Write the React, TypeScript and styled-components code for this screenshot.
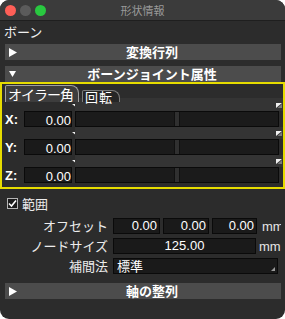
import React from 'react';
import styled, { createGlobalStyle } from 'styled-components';

const jp = `"Noto Sans CJK JP", "Liberation Sans", sans-serif`;
const latin = `"Liberation Sans", "Noto Sans CJK JP", sans-serif`;

const GlobalStyle = createGlobalStyle`
  html, body { margin: 0; padding: 0; background: #ffffff; }
  body { font-family: ${jp}; }
`;

const Window = styled.div`
  width: 285px;
  height: 319px;
  background: #2c2c2c;
  border-radius: 9px;
  overflow: hidden;
  display: flex;
  flex-direction: column;
  color: #ececec;
  font-family: ${jp};
  font-size: 13px;
`;

const TitleBar = styled.div`
  height: 20px;
  flex: none;
  display: grid;
  grid-template-columns: 1fr auto 1fr;
  align-items: center;
  background: #3b3b3b;
  border-bottom: 1px solid #1f1f1f;
`;

const Lights = styled.div`
  display: flex;
  gap: 4px;
  padding-left: 5px;
`;

const Light = styled.span<{ $color: string }>`
  width: 11px;
  height: 11px;
  border-radius: 50%;
  background: ${(p) => p.$color};
`;

const Title = styled.div`
  font-size: 11px;
  color: #9a9a9a;
`;

const GroupLabel = styled.div`
  height: 22px;
  line-height: 22px;
  padding-left: 4px;
  color: #f0f0f0;
`;

const Header = styled.div<{ $top?: number }>`
  height: 16px;
  margin: ${(p) => p.$top ?? 0}px 4px 0 5px;
  background: #4c4c4c;
  display: flex;
  align-items: center;
  position: relative;
  padding-left: 18px;
  font-weight: bold;
  color: #ffffff;
  line-height: 16px;
`;

const HeaderIcon = styled.span`
  position: absolute;
  left: 4px;
  top: 0;
  height: 16px;
  display: flex;
  align-items: center;
`;

const HeaderText = styled.span`
  flex: 1;
  text-align: center;
`;

const Frame = styled.div`
  height: 107px;
  box-sizing: border-box;
  border: 2px solid #e6dc00;
  display: flex;
  flex-direction: column;
`;

const Tabs = styled.div`
  display: flex;
  align-items: flex-end;
  gap: 3px;
  padding-left: 3px;
  height: 14px;
  flex: none;
  position: relative;
  z-index: 1;
`;

const Tab = styled.div<{ $active?: boolean }>`
  height: ${(p) => (p.$active ? 17 : 12)}px;
  margin-bottom: -4px;
  box-sizing: border-box;
  padding: ${(p) => (p.$active ? '0 5px 0 2px' : '0 6px 0 2px')};
  border: 1px solid ${(p) => (p.$active ? '#a0a0a0' : '#7c7c7c')};
  border-bottom: none;
  border-radius: 2px 8px 0 0;
  background: ${(p) => (p.$active ? '#3d3d3d' : '#262626')};
  color: #ffffff;
  font-size: ${(p) => (p.$active ? 14 : 13)}px;
  letter-spacing: ${(p) => (p.$active ? -1 : 1)}px;
  line-height: ${(p) => (p.$active ? 16 : 11)}px;
  white-space: nowrap;
`;

const Panel = styled.div`
  display: flex;
  flex-direction: column;
  padding: 0 4px 0 3px;
`;

const MarkerStrip = styled.div<{ $h: number }>`
  height: ${(p) => p.$h}px;
  display: grid;
  grid-template-columns: 16px 48px 1fr;
  column-gap: 3px;
`;

const MarkerLeft = styled.svg`
  grid-column: 2;
  align-self: end;
  justify-self: end;
  margin: 0 -5px 3px 0;
`;

const Band = styled.div`
  grid-column: 3;
  margin-right: -4px;
  background: #343434;
  display: flex;
  justify-content: flex-end;
  align-items: flex-end;
  padding: 0 1px 3px 0;
`;

const FieldRow = styled.div`
  height: 16px;
  display: grid;
  grid-template-columns: 16px 48px 1fr;
  column-gap: 3px;
  align-items: center;
`;

const Axis = styled.span`
  font-family: ${latin};
  font-weight: bold;
  font-size: 13px;
  color: #ffffff;
`;

const NumField = styled.div<{ $w?: number; $gap?: number; $align?: string; $low?: boolean }>`
  ${(p) => (p.$w ? `width: ${p.$w}px; flex: none;` : '')}
  margin-left: ${(p) => p.$gap ?? 0}px;
  height: 16px;
  box-sizing: border-box;
  background: #1a1a1a;
  border: 1px solid #0a0a0a;
  font-family: ${latin};
  font-size: 13px;
  color: #ffffff;
  text-align: ${(p) => p.$align ?? 'right'};
  line-height: 14px;
  padding: ${(p) => (p.$low ? '2px 0 0 0' : '0 2px')};
  overflow: hidden;
  white-space: nowrap;
`;

const Slider = styled.div`
  height: 16px;
  box-sizing: border-box;
  background: #1b1b1b;
  border: 1px solid #0a0a0a;
  display: flex;
  justify-content: center;
`;

const Thumb = styled.div`
  width: 6px;
  box-sizing: border-box;
  background: #303030;
  border-left: 1px solid #111;
  border-right: 1px solid #111;
`;

const CheckRow = styled.label`
  display: flex;
  align-items: center;
  gap: 4px;
  height: 13px;
  margin-top: 8px;
  padding-left: 7px;
`;

const Box = styled.span`
  width: 11px;
  height: 11px;
  box-sizing: border-box;
  border: 1px solid #b5b5b5;
  background: #1c1c1c;
  display: flex;
  align-items: center;
  justify-content: center;
`;

const Form = styled.div`
  margin-top: 8px;
  display: grid;
  grid-template-columns: 108px 1fr;
  column-gap: 5px;
  row-gap: 4px;
  padding-right: 4px;
`;

const FormLabel = styled.div`
  text-align: right;
  line-height: 16px;
  white-space: nowrap;
`;

const FormFields = styled.div`
  display: flex;
  align-items: center;
  min-width: 0;
`;

const Unit = styled.span<{ $gap: number }>`
  margin-left: ${(p) => p.$gap}px;
  font-family: ${latin};
  font-size: 13px;
  color: #e6e6e6;
  white-space: nowrap;
  overflow: hidden;
  min-width: 0;
`;

const Select = styled.div`
  width: 165px;
  height: 16px;
  box-sizing: border-box;
  background: #1a1a1a;
  border: 1px solid #0a0a0a;
  position: relative;
  padding-left: 3px;
  line-height: 14px;
  color: #ffffff;
`;

const SelectArrow = styled.svg`
  position: absolute;
  right: 2px;
  bottom: 2px;
`;

function TriRight() {
  return (
    <svg width="8" height="9" viewBox="0 0 8 9">
      <polygon points="0,0 8,4.5 0,9" fill="#ffffff" />
    </svg>
  );
}

function TriDown() {
  return (
    <svg width="7" height="6" viewBox="0 0 7 6">
      <polygon points="0,0 7,0 3.5,6" fill="#ffffff" />
    </svg>
  );
}

function AngleRow({ axis, first }: { axis: string; first?: boolean }) {
  return (
    <>
      <MarkerStrip $h={first ? 13 : 12}>
        <MarkerLeft width="5" height="4" viewBox="0 0 5 4">
          <polygon points="0,0 5,0 5,4" fill="#f0f0f0" />
        </MarkerLeft>
        <Band>
          <svg width="6" height="5" viewBox="0 0 6 5">
            <polygon points="0,0 6,0 0,5" fill="#f0f0f0" />
            <polygon points="6,1 6,5 1.5,5" fill="#7a7a7a" />
          </svg>
        </Band>
      </MarkerStrip>
      <FieldRow>
        <Axis>{axis}:</Axis>
        <NumField $low>0.00</NumField>
        <Slider>
          <Thumb />
        </Slider>
      </FieldRow>
    </>
  );
}

export default function App() {
  return (
    <>
      <GlobalStyle />
      <Window>
        <TitleBar>
          <Lights>
            <Light $color="#fe5f57" />
            <Light $color="#5b5b5b" />
            <Light $color="#29c840" />
          </Lights>
          <Title>形状情報</Title>
          <span />
        </TitleBar>
        <GroupLabel>ボーン</GroupLabel>
        <Header $top={1}>
          <HeaderIcon><TriRight /></HeaderIcon>
          <HeaderText>変換行列</HeaderText>
        </Header>
        <Header $top={6}>
          <HeaderIcon><TriDown /></HeaderIcon>
          <HeaderText>ボーンジョイント属性</HeaderText>
        </Header>
        <Frame>
          <Tabs>
            <Tab $active>オイラー角</Tab>
            <Tab>回転</Tab>
          </Tabs>
          <Panel>
            <AngleRow axis="X" first />
            <AngleRow axis="Y" />
            <AngleRow axis="Z" />
          </Panel>
        </Frame>
        <CheckRow>
          <Box>
            <svg width="9" height="9" viewBox="0 0 9 9">
              <path d="M1 4.5 L3.5 7 L8 1.5" stroke="#ffffff" strokeWidth="1.6" fill="none" />
            </svg>
          </Box>
          <span>範囲</span>
        </CheckRow>
        <Form>
          <FormLabel>オフセット</FormLabel>
          <FormFields>
            <NumField $w={47}>0.00</NumField>
            <NumField $w={46} $gap={3}>0.00</NumField>
            <NumField $w={45} $gap={3}>0.00</NumField>
            <Unit $gap={5}>mm</Unit>
          </FormFields>
          <FormLabel>ノードサイズ</FormLabel>
          <FormFields>
            <NumField $w={143} $align="center">125.00</NumField>
            <Unit $gap={3}>mm</Unit>
          </FormFields>
          <FormLabel>補間法</FormLabel>
          <FormFields>
            <Select>
              標準
              <SelectArrow width="4" height="4" viewBox="0 0 4 4">
                <polygon points="4,0 4,4 0,4" fill="#9a9a9a" />
              </SelectArrow>
            </Select>
          </FormFields>
        </Form>
        <Header $top={9}>
          <HeaderIcon><TriRight /></HeaderIcon>
          <HeaderText>軸の整列</HeaderText>
        </Header>
      </Window>
    </>
  );
}
